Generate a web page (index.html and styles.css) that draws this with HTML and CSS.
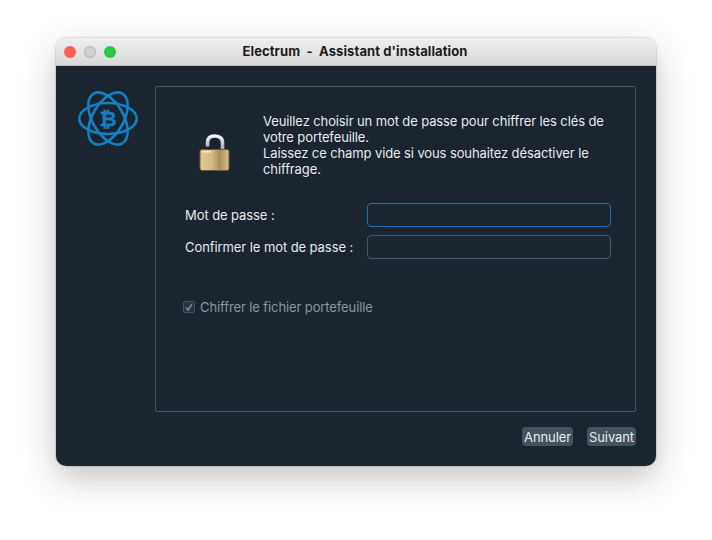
FILE: index.html
```html
<!DOCTYPE html>
<html lang="fr">
<head>
<meta charset="utf-8">
<title>Electrum - Assistant d'installation</title>
<link rel="stylesheet" href="styles.css">
</head>
<body>
<div class="window">
  <header class="titlebar">
    <div class="lights">
      <span class="light red"></span>
      <span class="light grey"></span>
      <span class="light green"></span>
    </div>
    <div class="title">Electrum &nbsp;-&nbsp; Assistant d'installation</div>
  </header>
  <main class="content">
    <div class="top">
      <aside class="side">
        <svg class="logo" viewBox="0 0 60 60" width="60" height="60" fill="none" stroke="#1280c4" stroke-width="2.6">
          <ellipse cx="30" cy="28.500" rx="28.700" ry="15.500"/>
          <ellipse cx="30" cy="28.500" rx="28.700" ry="15.500" transform="rotate(60 30 28.500)"/>
          <ellipse cx="30" cy="28.500" rx="28.700" ry="15.500" transform="rotate(-60 30 28.500)"/>
          <text class="btc" x="30" y="36" text-anchor="middle">₿</text>
        </svg>
      </aside>
      <section class="panel">
        <div class="intro">
          <svg class="lock" viewBox="0 0 34 40" width="34" height="40">
            <defs>
              <linearGradient id="gold" x1="0" y1="0" x2="1" y2="0">
                <stop offset="0" stop-color="#e3c894"/>
                <stop offset="0.4" stop-color="#d8bc86"/>
                <stop offset="0.68" stop-color="#ab8d5b"/>
                <stop offset="1" stop-color="#dcc08e"/>
              </linearGradient>
              <linearGradient id="steel" x1="0" y1="0" x2="0" y2="1">
                <stop offset="0" stop-color="#f2f3f5"/>
                <stop offset="1" stop-color="#9da3a9"/>
              </linearGradient>
            </defs>
            <path d="M8.500 12.500V8.500C8.500 4 11 2 15.500 2S23.500 4 23.500 8.500V16" fill="none" stroke="url(#steel)" stroke-width="3.600"/>
            <rect x="1" y="15.500" width="29" height="21" rx="2" fill="url(#gold)" stroke="#6f5a35" stroke-width="1"/>
            <rect x="3" y="17" width="9" height="1.600" fill="#f3e6c6"/>
          </svg>
          <p class="message">Veuillez choisir un mot de passe pour chiffrer les clés de votre portefeuille.<br>Laissez ce champ vide si vous souhaitez désactiver le chiffrage.</p>
        </div>
        <form class="fields">
          <label class="label" for="pw1">Mot de passe :</label>
          <input class="input focused" id="pw1" type="password">
          <label class="label" for="pw2">Confirmer le mot de passe :</label>
          <input class="input" id="pw2" type="password">
        </form>
        <div class="check">
          <span class="box"><svg viewBox="0 0 12 12" width="12" height="12" fill="none" stroke="#77828c" stroke-width="1.700"><path d="M3 6.500 5.200 9 9 3"/></svg></span>
          <span>Chiffrer le fichier portefeuille</span>
        </div>
      </section>
    </div>
    <footer class="actions">
      <button class="btn btn-cancel" type="button">Annuler</button>
      <button class="btn btn-next" type="button">Suivant</button>
    </footer>
  </main>
</div>
</body>
</html>
```
FILE: styles.css
```css
* { box-sizing: border-box; }
html, body { margin: 0; height: 100%; background: #fff; overflow: hidden; }
body { padding: 38px 56px 0; font-family: Inter, "Liberation Sans", sans-serif; font-size: 13px; letter-spacing: -0.11px; }
.window {
  width: 600px; height: 428px; border-radius: 10px; overflow: hidden;
  display: flex; flex-direction: column;
  box-shadow: 0 0 2px rgba(0,0,0,.35), 0 12px 34px rgba(0,0,0,.24);
}
.titlebar {
  height: 28px; flex: none; display: flex; align-items: center; position: relative;
  background: linear-gradient(#efefef, #d9d9d9);
  border-bottom: 1px solid #b8b8b8;
}
.lights { display: flex; gap: 8px; padding-left: 8px; }
.light { width: 12px; height: 12px; border-radius: 50%; }
.red { background: #ff5f57; }
.grey { background: #cfcfcf; box-shadow: inset 0 0 0 1px #b9b9b9; }
.green { background: #28c840; }
.title { position: absolute; left: 0; right: 0; text-align: center; font-weight: 700; font-size: 13px; color: #1c1c1c; letter-spacing: 0.1px; padding-right: 2px; padding-bottom: 1px; }
.content { flex: 1; background: #1a2530; display: flex; flex-direction: column; padding: 20px 20px 0 22px; }
.top { display: flex; }
.side { width: 77px; flex: none; padding-top: 4px; }
.logo { display: block; }
.btc { font: 700 21px "DejaVu Sans", sans-serif; fill: #1280c4; stroke: #1280c4; stroke-width: .4; }
.panel { width: 481px; height: 326px; border: 1px solid #44566a; border-radius: 2px; padding: 26px 24px 0 29px; color: #e8eaec; }
.intro { display: flex; align-items: flex-start; }
.lock { flex: none; margin: 21px 30px 0 14px; }
.message { margin: 0; line-height: 16px; width: 345px; }
.fields { display: grid; grid-template-columns: 182px 244px; row-gap: 8px; align-items: center; margin-top: 26px; }
.label { letter-spacing: -0.08px; }
.input { height: 24px; width: 244px; background: #1a2530; border: 1px solid #44566a; border-radius: 4px; outline: none; padding: 0 4px; }
.focused { border-color: #1a6fb5; }
.check { display: flex; align-items: center; gap: 5px; margin-top: 40px; margin-left: -2px; color: #8d959d; }
.box { width: 12px; height: 12px; border: 1px solid #44525f; border-radius: 2px; display: flex; background: #26323d; }
.box svg { flex: none; margin: -1px; }
.actions { display: flex; justify-content: flex-end; gap: 14px; margin-top: 15px; }
.btn { height: 19px; padding: 0; border: 0; border-radius: 4px; background: #45535f; color: #e8eaec; font: inherit; letter-spacing: inherit; }
.btn-cancel { width: 51px; }
.btn-next { width: 49px; }
```
